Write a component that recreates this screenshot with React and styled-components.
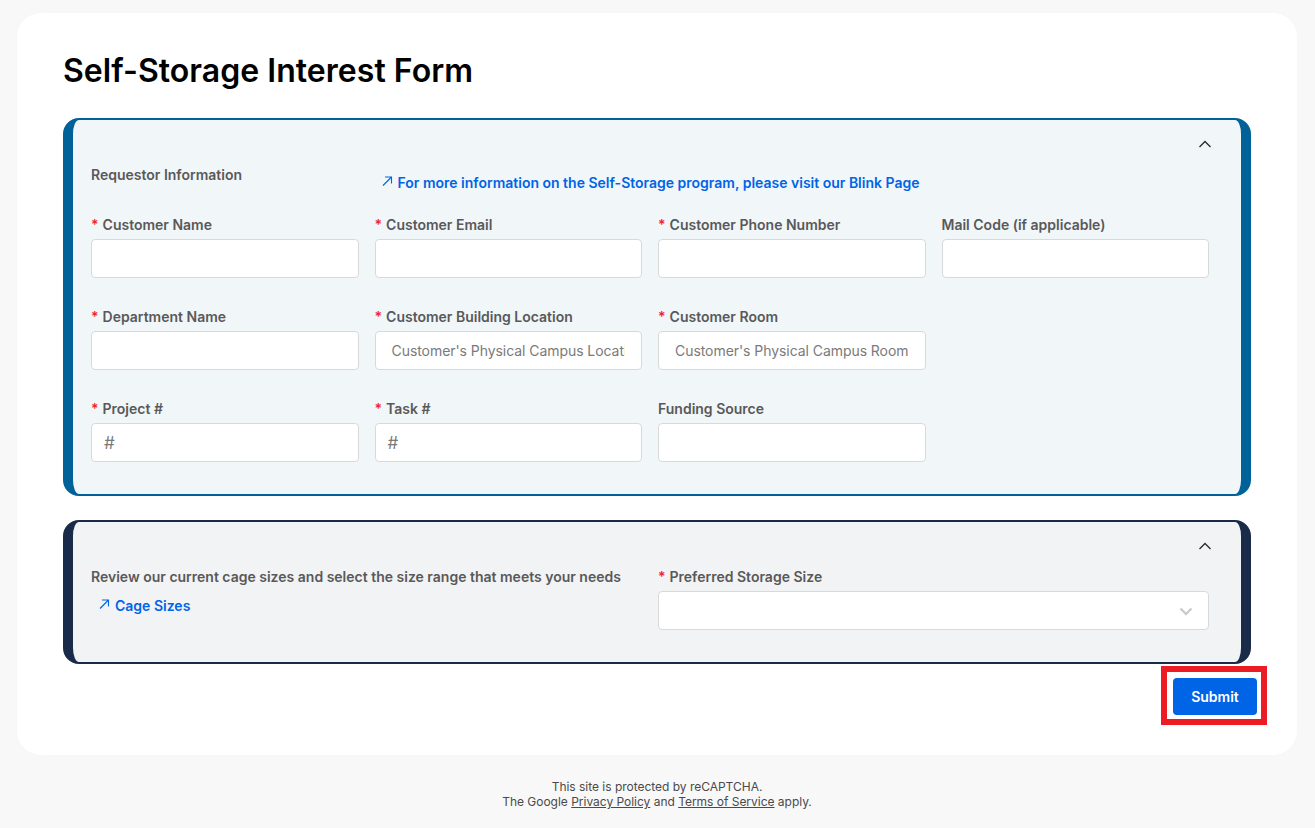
import React from "react";
import styled, { createGlobalStyle } from "styled-components";

const GlobalStyle = createGlobalStyle`
  html, body {
    margin: 0;
    padding: 0;
    background: #f8f8f8;
    font-family: Inter, "Liberation Sans", sans-serif;
  }
  * {
    box-sizing: border-box;
  }
`;

const Page = styled.div`
  width: 1315px;
  height: 828px;
  overflow: hidden;
  padding: 13px 18px 0 17px;
`;

const Card = styled.main`
  background: #ffffff;
  border-radius: 24px;
  padding: 38px 46px 40px;
  box-shadow: 0 0 4px rgba(0, 0, 0, 0.015);
`;

const Title = styled.h1`
  margin: 0 0 27px;
  font-size: 32px;
  line-height: 40px;
  font-weight: 600;
  letter-spacing: 0.04px;
  color: #000000;
`;

const Panel = styled.section`
  border-style: solid;
  border-width: 2px 10px;
  border-color: ${(p) => p.$accent};
  background: ${(p) => p.$bg};
  border-radius: 16px;
  padding: 12px 32px 32px 18px;
  & + & {
    margin-top: 24px;
  }
`;

const ToggleRow = styled.div`
  display: flex;
  justify-content: flex-end;
  height: 24px;
  margin: 0 -4px 9px 0;
  align-items: center;
  color: #2b2b2b;
`;

const FourGrid = styled.div`
  display: grid;
  grid-template-columns: repeat(4, 1fr);
  column-gap: 16px;
  row-gap: 29px;
`;

const IntroRow = styled(FourGrid)`
  height: 28px;
  margin-bottom: 22px;
`;

const SectionText = styled.div`
  font-size: 14px;
  line-height: 20px;
  font-weight: 600;
  color: #595959;
  white-space: nowrap;
`;

const InfoLink = styled.a`
  display: flex;
  align-items: center;
  gap: 5px;
  padding-left: ${(p) => p.$indent}px;
  margin-top: ${(p) => p.$top}px;
  font-size: 14px;
  line-height: 20px;
  font-weight: 600;
  color: #0064e6;
  white-space: nowrap;
  text-decoration: none;
  ${(p) => p.$span && `grid-column: span ${p.$span};`}
`;

const Field = styled.div`
  display: flex;
  flex-direction: column;
  min-width: 0;
`;

const Label = styled.label`
  display: block;
  height: 20px;
  margin-bottom: 4px;
  font-size: 14px;
  line-height: 20px;
  font-weight: 600;
  color: #595959;
  white-space: nowrap;
`;

const Star = styled.span`
  color: #f5222d;
  margin-right: 4px;
`;

const InputBox = styled.div`
  display: flex;
  align-items: center;
  height: 39px;
  padding: 0 16px;
  background: #ffffff;
  border: 1px solid #d9d9d9;
  border-radius: 4px;
`;

const Input = styled.input`
  flex: 1;
  width: 100%;
  min-width: 0;
  border: none;
  outline: none;
  padding: 0;
  background: transparent;
  font-family: inherit;
  font-size: 14px;
  letter-spacing: -0.06px;
  color: #525252;
  &::placeholder {
    color: #7a7a7a;
    opacity: 1;
  }
`;

const Prefix = styled.span`
  font-size: 17px;
  line-height: 20px;
  color: #7a7a7a;
  margin: 0 10px 0 -4px;
`;

const SplitGrid = styled.div`
  display: grid;
  grid-template-columns: 1fr 1fr;
  column-gap: 16px;
`;

const SelectBox = styled(InputBox)`
  justify-content: flex-end;
  padding-right: 14px;
  color: #c9c9c9;
`;

const Actions = styled.div`
  display: flex;
  justify-content: flex-end;
  margin: 14px -6px 0 0;
`;

const SubmitWrap = styled.div`
  position: relative;
`;

const SubmitButton = styled.button`
  display: block;
  width: 84px;
  height: 37px;
  border: none;
  border-radius: 4px;
  background: #0064e6;
  color: #ffffff;
  font-family: inherit;
  font-size: 14px;
  font-weight: 600;
`;

const Highlight = styled.div`
  position: absolute;
  inset: -12px -10px -10px -12px;
  border: 6px solid #ec1c24;
  pointer-events: none;
`;

const Footer = styled.footer`
  margin-top: 24px;
  text-align: center;
  font-size: 12px;
  line-height: 15px;
  letter-spacing: -0.02px;
  color: #4a4a4a;
  a {
    color: inherit;
    text-decoration: underline;
  }
`;

const ArrowIcon = () => (
  <svg width="12" height="12" viewBox="0 0 12 12" fill="none" stroke="currentColor" strokeWidth="1.1" style={{ marginTop: -5 }}>
    <path d="M2 10.5L10.5 2M4 2H10.5V8.5" />
  </svg>
);

const ChevronUpIcon = () => (
  <svg width="16" height="16" viewBox="0 0 16 16" fill="none" stroke="currentColor" strokeWidth="1.3">
    <path d="M2.5 11L8 5.5L13.5 11" />
  </svg>
);

const ChevronDownIcon = () => (
  <svg width="16" height="16" viewBox="0 0 16 16" fill="none" stroke="currentColor" strokeWidth="2.2">
    <path d="M2.5 5.5L8 11L13.5 5.5" />
  </svg>
);

const rows = [
  [
    { label: "Customer Name", required: true },
    { label: "Customer Email", required: true },
    { label: "Customer Phone Number", required: true },
    { label: "Mail Code (if applicable)" },
  ],
  [
    { label: "Department Name", required: true },
    { label: "Customer Building Location", required: true, placeholder: "Customer's Physical Campus Location" },
    { label: "Customer Room", required: true, placeholder: "Customer's Physical Campus Room" },
  ],
  [
    { label: "Project #", required: true, prefix: "#" },
    { label: "Task #", required: true, prefix: "#" },
    { label: "Funding Source" },
  ],
];

const FormField = ({ label, required, placeholder, prefix }) => (
  <Field>
    <Label>
      {required && <Star>*</Star>}
      {label}
    </Label>
    <InputBox>
      {prefix && <Prefix>{prefix}</Prefix>}
      <Input placeholder={placeholder} />
    </InputBox>
  </Field>
);

const App = () => {
  return (
    <Page>
      <GlobalStyle />
      <Card>
        <Title>Self-Storage Interest Form</Title>

        <Panel $accent="#006298" $bg="#f1f6f9">
          <ToggleRow>
            <ChevronUpIcon />
          </ToggleRow>
          <IntroRow>
            <SectionText>Requestor Information</SectionText>
            <InfoLink href="#" $span={3} $top={8} $indent={6}>
              <ArrowIcon />
              For more information on the Self-Storage program, please visit our Blink Page
            </InfoLink>
          </IntroRow>
          <FourGrid>
            {rows.flatMap((row, i) => [
              ...row.map((f) => <FormField key={f.label} {...f} />),
              ...Array.from({ length: 4 - row.length }, (_, k) => <div key={`${i}-${k}`} />),
            ])}
          </FourGrid>
        </Panel>

        <Panel $accent="#1a2b4a" $bg="#f2f3f5">
          <ToggleRow>
            <ChevronUpIcon />
          </ToggleRow>
          <SplitGrid>
            <div>
              <SectionText>Review our current cage sizes and select the size range that meets your needs</SectionText>
              <InfoLink href="#" $top={9} $indent={7}>
                <ArrowIcon />
                Cage Sizes
              </InfoLink>
            </div>
            <Field>
              <Label>
                <Star>*</Star>
                Preferred Storage Size
              </Label>
              <SelectBox>
                <ChevronDownIcon />
              </SelectBox>
            </Field>
          </SplitGrid>
        </Panel>

        <Actions>
          <SubmitWrap>
            <SubmitButton>Submit</SubmitButton>
            <Highlight />
          </SubmitWrap>
        </Actions>
      </Card>

      <Footer>
        This site is protected by reCAPTCHA.
        <br />
        The Google <a href="#">Privacy Policy</a> and <a href="#">Terms of Service</a> apply.
      </Footer>
    </Page>
  );
};

export default App;
